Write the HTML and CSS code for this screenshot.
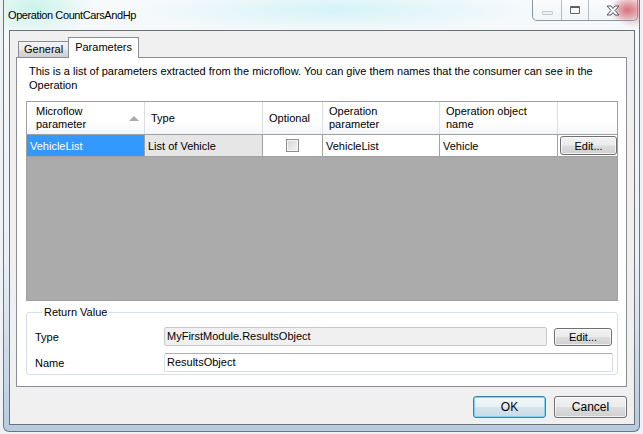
FILE: index.html
```html
<!DOCTYPE html>
<html>
<head>
<meta charset="utf-8">
<title>Operation CountCarsAndHp</title>
<link rel="stylesheet" href="styles.css">
</head>
<body>
<div class="window">
  <div class="titlebar">
    <span class="title">Operation CountCarsAndHp</span>
    <div class="caption">
      <div class="cap cap-min"><span class="min-glyph"></span></div>
      <div class="cap cap-max"><span class="max-glyph"></span></div>
      <div class="cap cap-close">
        <svg width="16" height="11" viewBox="0 0 16 11">
          <path d="M2 1 L6 1 L8 3.5 L10 1 L14 1 L10 5.5 L14 10 L10 10 L8 7.5 L6 10 L2 10 L6 5.5 Z" fill="#fff" stroke="#535a63" stroke-width="1" stroke-linejoin="round"/>
        </svg>
      </div>
    </div>
  </div>
  <div class="client">
    <div class="tabs">
      <div class="tab">General</div>
      <div class="tab active">Parameters</div>
    </div>
    <div class="tabpage">
      <p class="desc">This is a list of parameters extracted from the microflow. You can give them names that the consumer can see in the Operation</p>
      <div class="grid">
        <div class="grid-head">
          <div class="hcell hcell-sort"><span>Microflow parameter</span><span class="sort-arrow"></span></div>
          <div class="hcell">Type</div>
          <div class="hcell">Optional</div>
          <div class="hcell">Operation parameter</div>
          <div class="hcell">Operation object name</div>
          <div class="hcell hcell-last"></div>
        </div>
        <div class="grid-row">
          <div class="cell cell-selected">VehicleList</div>
          <div class="cell cell-readonly">List of Vehicle</div>
          <div class="cell cell-center"><span class="checkbox"></span></div>
          <div class="cell">VehicleList</div>
          <div class="cell">Vehicle</div>
          <div class="cell cell-last"><button class="btn btn-small">Edit...</button></div>
        </div>
        <div class="grid-empty"></div>
      </div>
      <fieldset class="group">
        <legend>Return Value</legend>
        <div class="field-row">
          <span class="label">Type</span>
          <div class="input input-readonly">MyFirstModule.ResultsObject</div>
          <button class="btn btn-field">Edit...</button>
        </div>
        <div class="field-row">
          <span class="label">Name</span>
          <div class="input input-wide">ResultsObject</div>
        </div>
      </fieldset>
    </div>
    <div class="dialog-buttons">
      <button class="btn btn-dialog btn-default">OK</button>
      <button class="btn btn-dialog">Cancel</button>
    </div>
  </div>
</div>
</body>
</html>
```
FILE: styles.css
```css
html, body {
  margin: 0;
  padding: 0;
}
body {
  width: 643px;
  height: 434px;
  overflow: hidden;
  background: #eef2f5;
  font-family: "Liberation Sans", Arial, sans-serif;
  font-size: 11px;
  color: #000;
}
.window {
  margin-left: 3px;
  width: 635px;
  height: 431px;
  border: 1px solid #6b7683;
  border-top: none;
  border-radius: 0 0 6px 6px;
  background:
    radial-gradient(ellipse 60px 30px at 30px 8px, rgba(120, 230, 200, 0.35), rgba(255,255,255,0) 100%),
    radial-gradient(ellipse 200px 22px at 330px 10px, rgba(150, 230, 240, 0.35), rgba(255,255,255,0) 100%),
    radial-gradient(ellipse 22px 18px at 630px 10px, rgba(200, 70, 90, 0.55), rgba(255,255,255,0) 100%),
    linear-gradient(to bottom, #f7fafc 0%, #e9f0f6 60%, #b7cbdf 100%);
  display: flex;
  flex-direction: column;
}
.titlebar {
  height: 30px;
  display: flex;
  align-items: flex-start;
  flex: none;
}
.title {
  margin-left: 4px;
  margin-top: 8px;
  font-size: 11px;
  line-height: 14px;
  letter-spacing: -0.4px;
  color: #000;
}
.caption {
  margin-left: auto;
  margin-right: 1px;
  height: 20px;
  display: flex;
  border: 1px solid #8c949e;
  border-top: none;
  border-radius: 0 0 5px 5px;
  background: linear-gradient(to bottom, rgba(255,255,255,0.5), rgba(235,242,248,0.6));
  overflow: hidden;
}
.cap {
  display: flex;
  align-items: center;
  justify-content: center;
  height: 20px;
}
.cap-min {
  width: 28px;
  border-right: 1px solid #b3bac2;
}
.cap-max {
  width: 26px;
  border-right: 1px solid #b3bac2;
}
.cap-close {
  width: 48px;
  background: radial-gradient(ellipse 18px 14px at 38px 10px, rgba(205, 70, 80, 0.7), rgba(255,255,255,0) 100%);
}
.min-glyph {
  margin-top: 6px;
  width: 9px;
  height: 2px;
  border: 1px solid #c4cad0;
  border-radius: 1px;
  background: #eef1f4;
}
.max-glyph {
  width: 8px;
  height: 5px;
  border: 1px solid #58616b;
  border-top-width: 2px;
  border-radius: 1px;
  background: #fff;
  box-shadow: 0 0 0 1px rgba(255,255,255,0.8);
}
.client {
  margin: 0 4px 6px 5px;
  flex: 1;
  border: 1px solid #6d7177;
  background: #f0f0f0;
  padding: 6px 7px 6px 6px;
  display: flex;
  flex-direction: column;
}
.tabs {
  display: flex;
  align-items: flex-end;
  padding-left: 2px;
  height: 20px;
  flex: none;
}
.tab {
  height: 15px;
  line-height: 15px;
  border: 1px solid #898c95;
  border-bottom: none;
  padding: 0 5px 0 5px;
  background: linear-gradient(to bottom, #f3f3f3 0%, #ebebeb 50%, #dddddd 50%, #cfcfcf 100%);
  font-size: 11px;
}
.tab.active {
  position: relative;
  z-index: 1;
  height: 20px;
  line-height: 18px;
  margin-left: -1px;
  margin-bottom: -1px;
  background: #fff;
  padding: 0 6px;
}
.tabpage {
  height: 322px;
  flex: none;
  border: 1px solid #898c95;
  background: #fff;
  padding: 6px 8px 0 9px;
  display: flex;
  flex-direction: column;
}
.desc {
  margin: 0;
  padding-left: 3px;
  line-height: 14px;
}
.grid {
  margin-top: 9px;
  height: 198px;
  flex: none;
  border: 1px solid #a0a0a0;
  display: flex;
  flex-direction: column;
  background: #ababab;
}
.grid-head {
  display: grid;
  grid-template-columns: 118px 118px 60px 117px 118px 1fr;
  height: 32px;
  border-bottom: 1px solid #a0a0a0;
  background: linear-gradient(to bottom, #ffffff 0%, #ffffff 60%, #f4f5f7 100%);
}
.hcell {
  border-right: 1px solid #dadde3;
  padding: 0 22px 0 6px;
  line-height: 13px;
  display: flex;
  align-items: center;
}
.hcell-sort {
  padding-left: 9px;
  justify-content: space-between;
  padding-right: 5px;
}
.hcell-last {
  border-right: none;
}
.sort-arrow {
  width: 0;
  height: 0;
  border-left: 5px solid transparent;
  border-right: 5px solid transparent;
  border-bottom: 5px solid #a7abb0;
  margin-top: 1px;
}
.grid-row {
  display: grid;
  grid-template-columns: 118px 118px 60px 117px 118px 1fr;
  height: 21px;
  border-bottom: 1px solid #a0a0a0;
  background: #fff;
}
.cell {
  border-right: 1px solid #a0a0a0;
  padding-left: 3px;
  display: flex;
  align-items: center;
  white-space: nowrap;
}
.cell-selected {
  background: #3399ff;
  color: #fff;
}
.cell-readonly {
  background: #e6e6e6;
}
.cell-center {
  justify-content: center;
  padding-left: 0;
}
.cell-last {
  border-right: none;
  padding-left: 2px;
}
.checkbox {
  width: 11px;
  height: 11px;
  border: 1px solid #8e8f8f;
  background: linear-gradient(135deg, #d6d6d6 0%, #f4f4f4 100%);
  box-shadow: inset 0 0 0 1px #f4f4f4;
}
.grid-empty {
  flex: 1;
  background: #ababab;
}
.btn {
  font-family: "Liberation Sans", Arial, sans-serif;
  font-size: 11px;
  color: #000;
  border: 1px solid #707070;
  border-radius: 3px;
  background: linear-gradient(to bottom, #f2f2f2 0%, #ebebeb 48%, #dddddd 52%, #cfcfcf 100%);
  box-shadow: inset 0 0 0 1px rgba(255,255,255,0.7);
  padding: 0;
  margin: 0;
}
.btn-small {
  width: 57px;
  height: 19px;
}
.group {
  margin: 5px 0 0 0;
  padding: 8px 4px 2px 8px;
  border: 1px solid #d5dfe5;
  border-radius: 3px;
  display: flex;
  flex-direction: column;
  gap: 7px;
}
.group legend {
  padding: 0 2px;
  margin-left: 7px;
  line-height: 13px;
  color: #000;
}
.field-row {
  display: flex;
  align-items: center;
  height: 19px;
}
.label {
  width: 129px;
  flex: none;
}
.input {
  height: 17px;
  line-height: 17px;
  padding-left: 2px;
  border: 1px solid #dbdfe6;
  border-top-color: #abadb3;
  border-radius: 2px;
  background: #fff;
  box-sizing: content-box;
}
.input-readonly {
  width: 379px;
  background: #f0f0f0;
  border-color: #c8c8c8;
}
.input-wide {
  width: 445px;
}
.btn-field {
  margin-left: 7px;
  width: 58px;
  height: 18px;
}
.dialog-buttons {
  margin-top: 9px;
  display: flex;
  justify-content: flex-end;
  gap: 8px;
  height: 22px;
  flex: none;
}
.btn-dialog {
  width: 73px;
  height: 22px;
  font-size: 12px;
}
.btn-default {
  border-color: #3c7fb1;
  box-shadow: inset 0 0 0 1px #7fd3f5;
  background: linear-gradient(to bottom, #f2f7fa 0%, #e8f1f6 48%, #d6e3ec 52%, #c9dbe7 100%);
}
```
